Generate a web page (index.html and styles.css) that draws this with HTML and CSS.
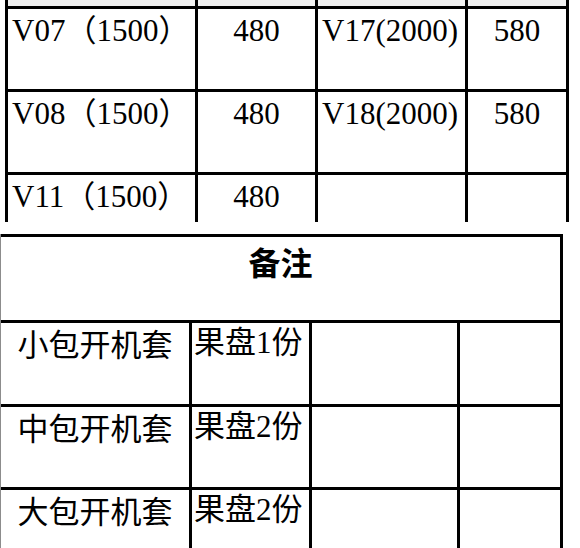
FILE: index.html
```html
<!DOCTYPE html>
<html lang="zh-CN">
<head>
<meta charset="utf-8">
<title>价格表</title>
<link rel="stylesheet" href="styles.css">
</head>
<body>
<div class="price-grid">
  <div class="cell strip"></div>
  <div class="cell strip"></div>
  <div class="cell strip"></div>
  <div class="cell strip"></div>

  <div class="cell label">V07（1500）</div>
  <div class="cell num">480</div>
  <div class="cell label">V17(2000)</div>
  <div class="cell num">580</div>

  <div class="cell label">V08（1500）</div>
  <div class="cell num">480</div>
  <div class="cell label">V18(2000)</div>
  <div class="cell num">580</div>

  <div class="cell label">V11（1500）</div>
  <div class="cell num">480</div>
  <div class="cell"></div>
  <div class="cell"></div>
</div>

<div class="notes-grid">
  <div class="cell head">备注</div>

  <div class="cell pkg">小包开机套</div>
  <div class="cell gift">果盘1份</div>
  <div class="cell"></div>
  <div class="cell"></div>

  <div class="cell pkg">中包开机套</div>
  <div class="cell gift">果盘2份</div>
  <div class="cell"></div>
  <div class="cell"></div>

  <div class="cell pkg">大包开机套</div>
  <div class="cell gift">果盘2份</div>
  <div class="cell"></div>
  <div class="cell"></div>
</div>
</body>
</html>
```

FILE: styles.css
```css
html, body {
  margin: 0;
  padding: 0;
  background: #ffffff;
  overflow: hidden;
}

body {
  width: 580px;
  height: 548px;
  font-family: "Liberation Serif", "Noto Sans CJK SC", serif;
  color: #000;
}

.cell {
  background: #ffffff;
  box-sizing: border-box;
  white-space: nowrap;
  min-width: 0;
}

/* upper price table */
.price-grid {
  margin-left: 5px;
  width: 564px;
  display: grid;
  grid-template-columns: 187px 117px 147px 98px;
  grid-template-rows: 6px 80px 80px 47px;
  gap: 3px;
  padding: 0 3px;
  box-sizing: border-box;
  background: #000;
}

.price-grid .strip {
  background: #f1f1f1;
}

.label {
  font-size: 31px;
  line-height: 36px;
  padding: 4px 0 0 4px;
}

.num {
  font-size: 31px;
  line-height: 36px;
  padding-top: 4px;
  text-align: center;
}

/* notes table */
.notes-grid {
  margin-top: 12px;
  width: 563px;
  display: grid;
  grid-template-columns: 188px 117px 145px 100px;
  grid-template-rows: 83px 81px 80px 58px;
  gap: 3px;
  padding: 3px 3px 0 0;
  box-sizing: border-box;
  background: #000;
  border-left: 1px solid #8c8c8c;
}

.head {
  grid-column: 1 / -1;
  font-family: "Noto Sans CJK SC", sans-serif;
  font-weight: 700;
  font-size: 32px;
  line-height: 36px;
  padding-top: 6px;
  text-align: center;
}

.pkg {
  font-family: "Noto Sans CJK SC", sans-serif;
  font-size: 31px;
  line-height: 36px;
  padding-top: 2px;
  text-align: center;
}

.gift {
  font-size: 31px;
  line-height: 36px;
  padding: 2px 0 0 2px;
}
```
